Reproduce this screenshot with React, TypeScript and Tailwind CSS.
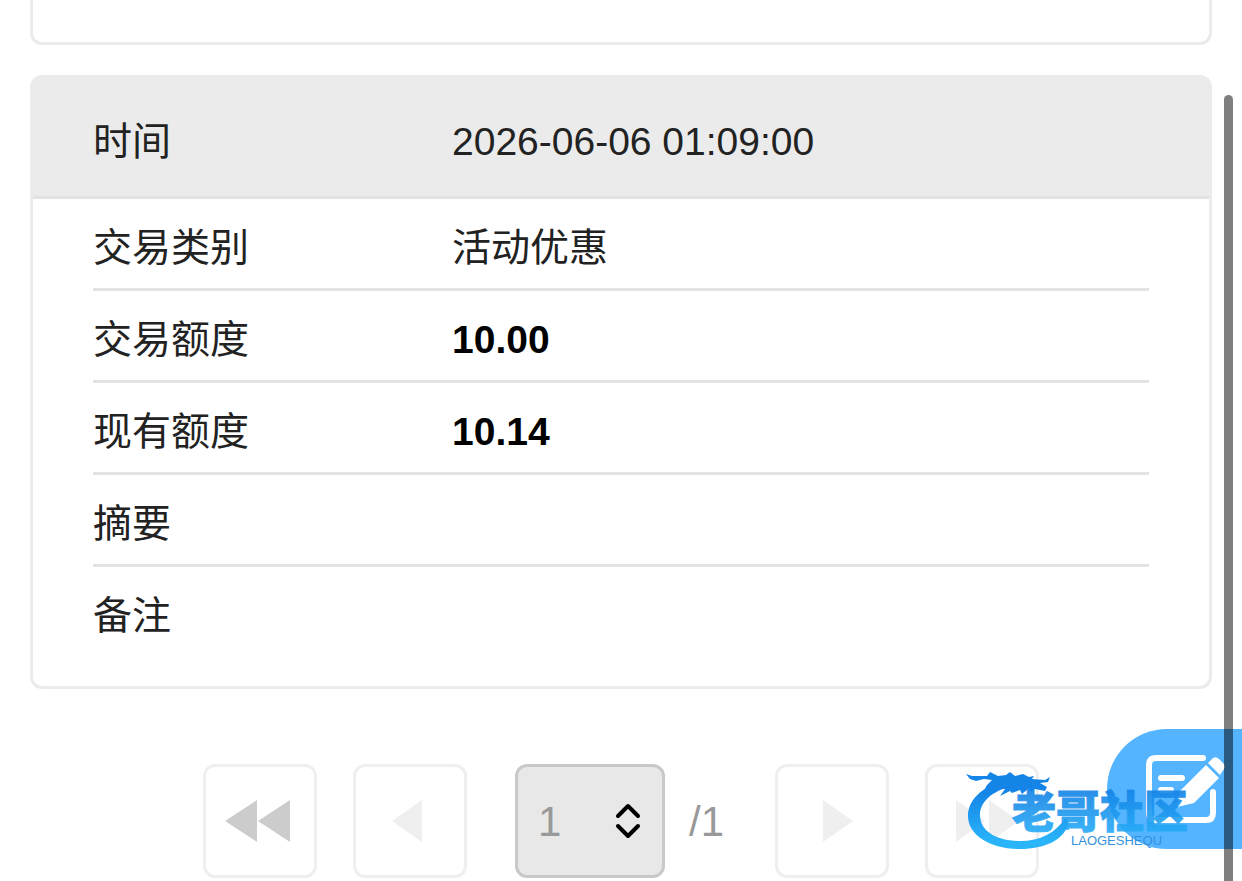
type Row = { label: string; value?: string; strong?: boolean };

const rows: Row[] = [
  { label: "交易类别", value: "活动优惠" },
  { label: "交易额度", value: "10.00", strong: true },
  { label: "现有额度", value: "10.14", strong: true },
  { label: "摘要" },
  { label: "备注" },
];

function PageButton({
  label,
  paths,
  active,
}: {
  label: string;
  paths: string[];
  active?: boolean;
}) {
  return (
    <button
      type="button"
      aria-label={label}
      className="flex size-[114px] shrink-0 items-center justify-center rounded-xl border-3 border-[#efefef] bg-white"
    >
      <svg
        viewBox="0 0 108 108"
        className={active ? "size-full text-[#cccccc]" : "size-full text-[#efefef]"}
        fill="currentColor"
      >
        {paths.map((d) => (
          <path key={d} d={d} />
        ))}
      </svg>
    </button>
  );
}

function Pager() {
  return (
    <nav className="mt-[75px] flex items-center justify-center gap-9">
      <PageButton
        label="首页"
        active
        paths={["M19 54L51 33V75Z", "M52 54L84 33V75Z"]}
      />
      <PageButton label="上一页" paths={["M36 54L66 33V75Z"]} />
      <div className="flex w-[236px] items-center gap-6 px-3 text-[42px] text-[#999999]">
        <div className="relative">
          <select
            aria-label="页码"
            defaultValue="1"
            className="block h-[114px] w-[150px] appearance-none rounded-xl border-3 border-[#c9c9c9] bg-[#e8e8e8] pl-5"
          >
            <option value="1">1</option>
          </select>
          <svg
            viewBox="0 0 26 36"
            className="pointer-events-none absolute top-[39px] right-6 h-9 w-[26px]"
            fill="none"
            stroke="#000"
            strokeWidth="4"
            strokeLinecap="round"
            strokeLinejoin="round"
          >
            <path d="M3 13L13 3L23 13" />
            <path d="M3 23L13 33L23 23" />
          </svg>
        </div>
        <span>/1</span>
      </div>
      <PageButton label="下一页" paths={["M45 33L75 54L45 75Z"]} />
      <PageButton
        label="末页"
        paths={["M28 33L57 54L28 75Z", "M61 33L91 54L61 75Z"]}
      />
    </nav>
  );
}

function FeedbackButton() {
  return (
    <button
      type="button"
      aria-label="反馈"
      className="absolute right-0 bottom-8 h-[120px] w-[135px] rounded-l-full bg-[#54b4ff]"
    >
      <svg viewBox="0 0 135 120" className="size-full" fill="none" stroke="#fff">
        <path
          d="M96 29H49Q42 29 42 36V84Q42 91 49 91H99Q106 91 106 84V63"
          strokeWidth="6"
          strokeLinecap="round"
        />
        <path d="M54 49H75M54 61H64" strokeWidth="6" strokeLinecap="round" />
        <path d="M99 36L112 49L87 74L70 78L73 62Z" fill="#fff" stroke="none" />
        <path
          d="M101 34L106 29Q109 27 112 30L116 34Q119 37 117 40L113 46Z"
          fill="#fff"
          stroke="none"
        />
      </svg>
    </button>
  );
}

function CommunityLogo() {
  return (
    <svg
      viewBox="0 0 270 90"
      className="pointer-events-none absolute right-3 bottom-[26px] h-[90px] w-[270px]"
    >
      <defs>
        <linearGradient
          id="logo"
          x1="0"
          y1="0"
          x2="0"
          y2="90"
          gradientUnits="userSpaceOnUse"
        >
          <stop offset="0.3" stopColor="#1484e6" />
          <stop offset="0.85" stopColor="#2ab4fa" />
        </linearGradient>
      </defs>
      <g fill="url(#logo)">
        <path d="M38 18C20 24 8 36 8 51C8 70 30 84 60 84C85 84 103 75 108 60L106 52C96 68 80 76 60 76C36 76 20 66 20 50C20 38 30 28 46 23Z" />
        <path d="M6 9L12 11L20 11L27 11L30 7L38 11L46 10L50 7L55 11L63 9L69 12L74 11L72 14L85 15L90 12L88 17L80 18L87 22L85 26L75 24L71 27L68 24L62 29L60 25L52 28L50 26L40 31L45 24L38 24L28 27L20 33L27 20L32 15L24 14L16 16L10 14Z" />
      </g>
      <text
        x="52"
        y="63"
        fontSize="44"
        className="font-black opacity-90"
        fill="url(#logo)"
        stroke="url(#logo)"
        strokeWidth="1"
      >
        老哥社区
      </text>
      <text x="111" y="80" fontSize="13" fill="#3591dc">
        LAOGESHEQU
      </text>
    </svg>
  );
}

export default function App() {
  return (
    <div className="relative h-screen overflow-hidden bg-white px-[30px] font-['Liberation_Sans','Noto_Sans_CJK_SC',sans-serif] text-[#222222]">
      <div className="h-[45px] rounded-b-xl border-3 border-t-0 border-[#ebebeb]" />

      <section className="mt-[30px] rounded-xl border-3 border-[#ebebeb] pb-[27px] text-[39px]">
        <div className="flex h-[121px] items-center border-b-3 border-[#e3e3e3] bg-[#ebebeb] px-[60px] pt-[10px]">
          <span className="w-[34%]">时间</span>
          <span>2026-06-06 01:09:00</span>
        </div>
        <dl className="px-[60px]">
          {rows.map((row) => (
            <div
              key={row.label}
              className="flex h-[92px] items-center border-b-3 border-[#e3e3e3] pt-[10px] last:border-transparent"
            >
              <dt className="w-[34%]">{row.label}</dt>
              <dd className={row.strong ? "font-bold text-black" : ""}>{row.value}</dd>
            </div>
          ))}
        </dl>
      </section>

      <Pager />
      <FeedbackButton />
      <div className="absolute top-[95px] right-[9px] bottom-0 w-[9px] rounded-t-full bg-black/50" />
      <CommunityLogo />
    </div>
  );
}
